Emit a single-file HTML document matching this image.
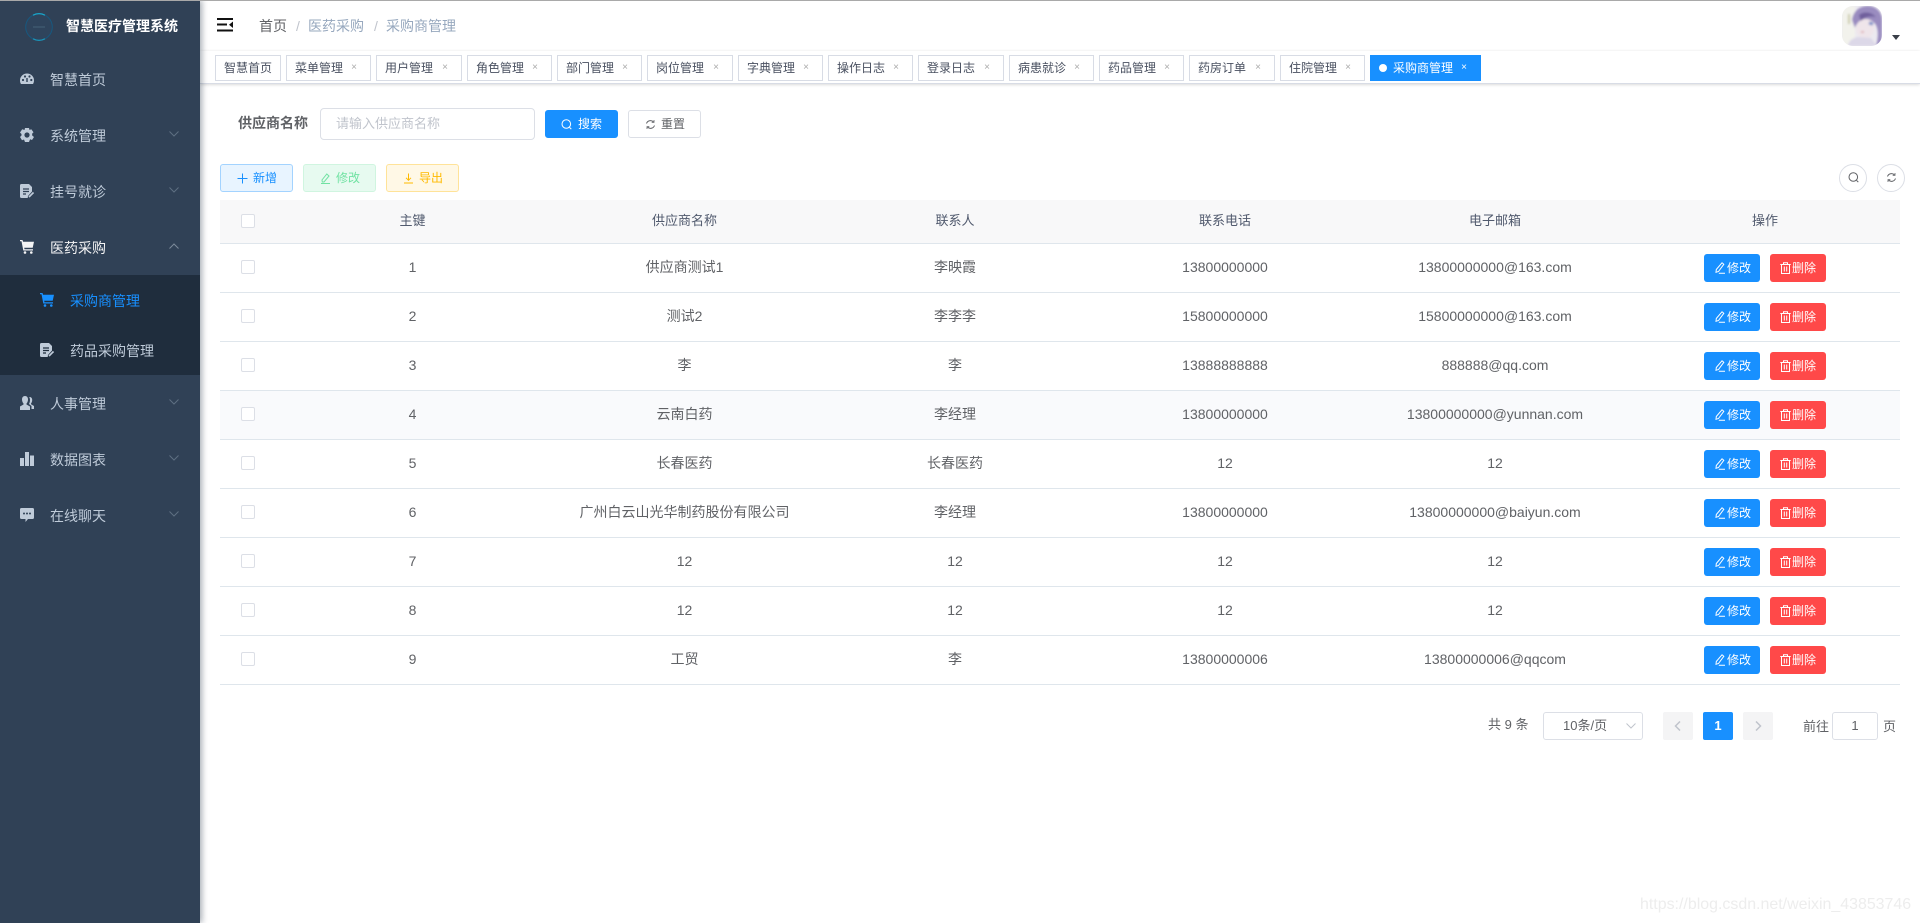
<!DOCTYPE html>
<html lang="zh-CN"><head><meta charset="utf-8"><title>采购商管理</title>
<style>
*{box-sizing:border-box}
html,body{margin:0;padding:0;width:1920px;height:923px;overflow:hidden;background:#fff;font-family:"Liberation Sans","Noto Sans CJK SC",sans-serif;font-size:14px;color:#606266}
body{filter:blur(.3px)}
#top{position:absolute;left:0;top:0;width:1920px;height:1px;background:#a9a9a9;z-index:9}
#side{position:absolute;left:0;top:0;width:200px;height:923px;background:#304156;box-shadow:2px 0 6px rgba(0,21,41,.35);z-index:5}
#side .t{position:absolute;left:50px;font-size:14px;line-height:20px;color:#bfcbd9;white-space:nowrap}
#side svg{position:absolute}
#sub{position:absolute;left:0;top:275px;width:200px;height:100px;background:#1f2d3d}
.chev{position:absolute;left:169px;width:10px;height:6px}
#nav{position:absolute;left:200px;top:1px;width:1720px;height:50px;box-shadow:0 1px 4px rgba(0,21,41,.08);background:#fff}
.bc{position:absolute;top:16px;line-height:20px;font-size:14px;color:#97a8be;white-space:nowrap}
#tags{position:absolute;left:200px;top:51px;width:1720px;height:33px;background:#fff;border-bottom:1px solid #d8dce5;box-shadow:0 1px 3px 0 rgba(0,0,0,.12),0 0 3px 0 rgba(0,0,0,.04)}
.tag{position:absolute;top:55px;height:26px;border:1px solid #d8dce5;background:#fff;color:#495060;font-size:12px;line-height:24px;padding-left:8px;white-space:nowrap;z-index:2}
.tag i{position:absolute;font-style:normal;right:13px;top:0;color:#aaa;font-size:10px}
.btn{position:absolute;height:28px;border-radius:3px;font-size:12px;line-height:26px;border:1px solid #dcdfe6;white-space:nowrap}
.btn svg{position:absolute;top:8px}
.btn span{position:absolute;top:0}
.lh{position:absolute;left:220px;top:200px;width:1680px;height:43px;background:#f8f8f9}
.line{position:absolute;left:220px;width:1680px;height:1px;background:#dfe6ec}
.cell{position:absolute;width:400px;text-align:center;line-height:20px;font-size:14px;color:#606266;white-space:nowrap}
.c1{left:212.5px}.c2{left:484.5px}.c3{left:755px}.c4{left:1025px}.c5{left:1295px}.c6{left:1565px}
.hd{color:#515a6e;font-weight:400;font-size:13px}
.cb{position:absolute;left:241px;width:14px;height:14px;border:1px solid #dcdfe6;border-radius:2px;background:#fff}
.ab{position:absolute;width:56px;height:28px;border-radius:3px;color:#fff;font-size:12px;line-height:28px;white-space:nowrap}
.ab span{position:absolute;left:23px;top:0}
.ab.d span{left:22px}
.ab svg{position:absolute;left:10px;top:8px}
.e{left:1704px;background:#1890ff}.d{left:1770px;background:#ff4949}
.pg{position:absolute;white-space:nowrap;font-size:13px;color:#606266}
</style></head><body>
<div id="top"></div>

<div id="side">
  <svg style="left:24px;top:12px" width="30" height="30" viewBox="0 0 30 30"><circle cx="15" cy="15" r="13.300" fill="#2f445c" stroke="#17587f" stroke-width="1"/><path d="M9 3.200A13 13 0 0 1 21 3.200" fill="none" stroke="#1aa5c9" stroke-width="1.200"/><path d="M9 26.800A13 13 0 0 0 21 26.800" fill="none" stroke="#1b93b8" stroke-width="1.200"/><path d="M9 15h12" stroke="#4d6a80" stroke-width=".8"/></svg>
  <div class="t" style="left:66px;top:16px;color:#fff;font-weight:700">智慧医疗管理系统</div>

  <svg style="left:20px;top:72px" width="14" height="14" viewBox="0 0 14 14"><path fill="#bfcbd9" d="M7 1.500A7 7 0 0 0 0 8.500c0 1.300.4 2.600 1 3.500h12c.6-.9 1-2.200 1-3.500a7 7 0 0 0-7-7z"/><circle cx="3" cy="8" r="1.100" fill="#304156"/><circle cx="5" cy="4.500" r="1.100" fill="#304156"/><circle cx="9.500" cy="4.500" r="1.100" fill="#304156"/><circle cx="11.300" cy="8" r="1.100" fill="#304156"/><path d="M7 10V6" stroke="#304156" stroke-width="1.400"/></svg>
  <div class="t" style="top:70px">智慧首页</div>

  <svg style="left:20px;top:128px" width="14" height="14" viewBox="0 0 14 14"><path fill="#bfcbd9" d="M5 0h4l.5 2 1.800-.8 2.200 3-1.400 1.600.1 1.700L14 9l-2 3-1.900-.7L9 14H5l-1-2.500-2 .7-2-3.200L1.500 7.500V6L0 4.500 2.200 1.200 4.500 2z"/><circle cx="7" cy="7" r="2.600" fill="#304156"/></svg>
  <div class="t" style="top:126px">系统管理</div>
  <svg class="chev" style="top:131px" viewBox="0 0 10 6"><path d="M.5.5 5 5 9.500.5" fill="none" stroke="#5e6f82" stroke-width="1"/></svg>

  <svg style="left:20px;top:184px" width="14" height="14" viewBox="0 0 14 14"><path fill="#bfcbd9" d="M1.500 0H9l3 3v4.500L8 12l-.3 2H1.500A1.500 1.500 0 0 1 0 12.500v-11A1.500 1.500 0 0 1 1.500 0z"/><path d="M3 5h6M3 7.500h6M3 10h3" stroke="#304156" stroke-width="1.200"/><path d="M9 13l4.500-4.500" stroke="#bfcbd9" stroke-width="1.600"/></svg>
  <div class="t" style="top:182px">挂号就诊</div>
  <svg class="chev" style="top:187px" viewBox="0 0 10 6"><path d="M.5.5 5 5 9.500.5" fill="none" stroke="#5e6f82" stroke-width="1"/></svg>

  <svg style="left:20px;top:240px" width="14" height="14" viewBox="0 0 14 14"><path fill="#f4f4f5" d="M0 0h2.500l.6 1.800H14l-1.300 6H4.200l.3 1.400H13v1.300H3.300L1.500 1.300H0z"/><circle cx="5" cy="12.500" r="1.300" fill="#f4f4f5"/><circle cx="11.300" cy="12.500" r="1.300" fill="#f4f4f5"/></svg>
  <div class="t" style="top:238px;color:#f4f4f5">医药采购</div>
  <svg class="chev" style="top:243px" viewBox="0 0 10 6"><path d="M.5 5.500 5 1l4.500 4.500" fill="none" stroke="#7c8a9a" stroke-width="1"/></svg>

  <div id="sub"></div>
  <svg style="left:40px;top:293px" width="14" height="14" viewBox="0 0 14 14"><path fill="#1890ff" d="M0 0h2.500l.6 1.800H14l-1.300 6H4.200l.3 1.400H13v1.300H3.300L1.500 1.300H0z"/><circle cx="5" cy="12.500" r="1.300" fill="#1890ff"/><circle cx="11.300" cy="12.500" r="1.300" fill="#1890ff"/></svg>
  <div class="t" style="left:70px;top:291px;color:#1890ff">采购商管理</div>
  <svg style="left:40px;top:343px" width="14" height="14" viewBox="0 0 14 14"><path fill="#bfcbd9" d="M1.500 0H9l3 3v4.500L8 12l-.3 2H1.500A1.500 1.500 0 0 1 0 12.500v-11A1.500 1.500 0 0 1 1.500 0z"/><path d="M3 5h6M3 7.500h6M3 10h3" stroke="#1f2d3d" stroke-width="1.200"/><path d="M9 13l4.500-4.500" stroke="#bfcbd9" stroke-width="1.600"/></svg>
  <div class="t" style="left:70px;top:341px">药品采购管理</div>

  <svg style="left:20px;top:396px" width="14" height="14" viewBox="0 0 14 14"><path fill="#bfcbd9" d="M5 0c2 0 3 1.500 3 3.500S7 7 6.500 7.500v1L10 10.500V14H0v-3.500l3.500-2v-1C3 7 2 5.500 2 3.500S3 0 5 0z"/><path fill="#bfcbd9" d="M9.500 1c1.800 0 2.700 1.300 2.700 3s-.8 3-1.200 3.500v.8l3 1.700V13h-2.500v-3L9 8c.6-1 1-2.500 1-4 0-1-.2-2-.8-3z"/></svg>
  <div class="t" style="top:394px">人事管理</div>
  <svg class="chev" style="top:399px" viewBox="0 0 10 6"><path d="M.5.5 5 5 9.500.5" fill="none" stroke="#5e6f82" stroke-width="1"/></svg>

  <svg style="left:20px;top:452px" width="14" height="14" viewBox="0 0 14 14"><path fill="#bfcbd9" d="M0 6h4v8H0zM5 0h4v14H5zM10 3.500h4V14h-4z"/></svg>
  <div class="t" style="top:450px">数据图表</div>
  <svg class="chev" style="top:455px" viewBox="0 0 10 6"><path d="M.5.5 5 5 9.500.5" fill="none" stroke="#5e6f82" stroke-width="1"/></svg>

  <svg style="left:20px;top:508px" width="14" height="14" viewBox="0 0 14 14"><path fill="#bfcbd9" d="M1.500 0h11A1.500 1.500 0 0 1 14 1.500v8a1.500 1.500 0 0 1-1.500 1.500H8l-2.500 3V11h-4A1.500 1.500 0 0 1 0 9.500v-8A1.500 1.500 0 0 1 1.500 0z"/><circle cx="4" cy="5.500" r="1" fill="#304156"/><circle cx="7" cy="5.500" r="1" fill="#304156"/><circle cx="10" cy="5.500" r="1" fill="#304156"/></svg>
  <div class="t" style="top:506px">在线聊天</div>
  <svg class="chev" style="top:511px" viewBox="0 0 10 6"><path d="M.5.5 5 5 9.500.5" fill="none" stroke="#5e6f82" stroke-width="1"/></svg>
</div>

<div id="nav"></div>
<svg style="position:absolute;left:217px;top:18px;z-index:3" width="16" height="14" viewBox="0 0 16 14"><path d="M0 1h16M0 6.500h10M0 12.500h16" stroke="#111" stroke-width="2"/><path d="M16 3.500v6.500L12 6.700z" fill="#111"/></svg>
<div class="bc" style="left:259px;color:#606266">首页</div>
<div class="bc" style="left:296px;color:#c0c4cc">/</div>
<div class="bc" style="left:308px">医药采购</div>
<div class="bc" style="left:374px;color:#c0c4cc">/</div>
<div class="bc" style="left:386px">采购商管理</div>

<svg style="position:absolute;left:1842px;top:6px;z-index:3" width="40" height="40" viewBox="0 0 40 40"><defs><clipPath id="av"><rect width="40" height="40" rx="11"/></clipPath><filter id="bl"><feGaussianBlur stdDeviation="1"/></filter></defs><g clip-path="url(#av)"><rect width="40" height="40" fill="#eceaf0"/><g filter="url(#bl)"><path d="M0 0h13v40H0z" fill="#f2f2ec"/><path d="M10 14C11 5 18 0 26 0c8 0 14 6 14 14v26h-6c2-7 3-15 0-21-3-5-8-6-13-5-4 1-7 4-8 8z" fill="#9a8cc0"/><path d="M14 23c0-6 4-10 10-10s9 5 8 11c-1 5-4 8-9 8-5 0-9-4-9-9z" fill="#efe5ea"/><path d="M17 9c5-4 12-3 17 2-5-1-11-1-15 4z" fill="#6f5f9c"/><path d="M27 17l4 1" stroke="#7f90c8" stroke-width="3"/><path d="M19 26h3" stroke="#d9a8ac" stroke-width="1.500"/><path d="M6 40c1-6 5-8 10-9l13 1 6 8z" fill="#dcd8e8"/><path d="M7 8v10" stroke="#c9c9a8" stroke-width="2"/></g></g></svg>
<svg style="position:absolute;left:1892px;top:35px;z-index:3" width="8" height="5" viewBox="0 0 8 5"><path d="M0 0h8L4 5z" fill="#3a3f48"/></svg>

<div id="tags"></div>
<div class="tag" style="left:215px;width:66px">智慧首页</div>
<div class="tag" style="left:286px;width:85px">菜单管理<i>×</i></div>
<div class="tag" style="left:376px;width:86px">用户管理<i>×</i></div>
<div class="tag" style="left:467px;width:85px">角色管理<i>×</i></div>
<div class="tag" style="left:557px;width:85px">部门管理<i>×</i></div>
<div class="tag" style="left:647px;width:86px">岗位管理<i>×</i></div>
<div class="tag" style="left:738px;width:85px">字典管理<i>×</i></div>
<div class="tag" style="left:828px;width:85px">操作日志<i>×</i></div>
<div class="tag" style="left:918px;width:86px">登录日志<i>×</i></div>
<div class="tag" style="left:1009px;width:85px">病患就诊<i>×</i></div>
<div class="tag" style="left:1099px;width:85px">药品管理<i>×</i></div>
<div class="tag" style="left:1189px;width:86px">药房订单<i>×</i></div>
<div class="tag" style="left:1280px;width:85px">住院管理<i>×</i></div>
<div class="tag" style="left:1370px;width:111px;background:#1890ff;border-color:#1890ff;color:#fff;padding-left:22px"><b style="position:absolute;left:8px;top:8px;width:8px;height:8px;border-radius:50%;background:#fff"></b>采购商管理<i style="color:#fff">×</i></div>

<div style="position:absolute;left:238px;top:113px;line-height:20px;font-weight:700;color:#606266;font-size:14px;white-space:nowrap">供应商名称</div>
<div style="position:absolute;left:320px;top:108px;width:215px;height:32px;border:1px solid #dcdfe6;border-radius:4px;background:#fff;font-size:13px;line-height:30px;padding-left:15px;color:#c0c4cc;white-space:nowrap">请输入供应商名称</div>
<div class="btn" style="left:545px;top:110px;width:73px;background:#1890ff;border-color:#1890ff;color:#fff"><svg style="left:15px" width="11" height="11" viewBox="0 0 11 11"><circle cx="5.300" cy="5" r="4.300" fill="none" stroke="#fff"/><path d="M8.500 8.300l1.800 1.800" stroke="#fff"/></svg><span style="left:32px">搜索</span></div>
<div class="btn" style="left:628px;top:110px;width:73px;background:#fff;color:#606266"><svg style="left:16px" width="11" height="11" viewBox="0 0 11 11"><path d="M1.500 4.500A4.200 4.200 0 0 1 8.500 3M9.500 6.500A4.200 4.200 0 0 1 2.500 8" fill="none" stroke="#606266"/><path d="M9 1v2.300H6.700M2 10V7.700h2.300" fill="none" stroke="#606266" stroke-width=".8"/></svg><span style="left:32px">重置</span></div>

<div class="btn" style="left:220px;top:164px;width:73px;background:#e8f4ff;border-color:#a3d3ff;color:#1890ff"><svg style="left:16px" width="11" height="11" viewBox="0 0 11 11"><path d="M5.500 .5v10M.5 5.500h10" stroke="#1890ff"/></svg><span style="left:32px">新增</span></div>
<div class="btn" style="left:303px;top:164px;width:73px;background:#e7faf0;border-color:#d0f5e0;color:#71e2a3"><svg style="left:16px" width="11" height="11" viewBox="0 0 11 11"><path d="M6.800 1 9 3 4 9H2.300L2 7zM1 10.500h9" fill="none" stroke="#71e2a3"/></svg><span style="left:32px">修改</span></div>
<div class="btn" style="left:386px;top:164px;width:73px;background:#fff8e6;border-color:#ffe399;color:#ffba00"><svg style="left:16px" width="11" height="11" viewBox="0 0 11 11"><path d="M5.500 .5v6.500M3 4.800l2.500 2.500L8 4.800M1 10h9" fill="none" stroke="#ffba00"/></svg><span style="left:32px">导出</span></div>

<div style="position:absolute;left:1839px;top:164px;width:28px;height:28px;border:1px solid #dcdfe6;border-radius:50%"></div>
<svg style="position:absolute;left:1848px;top:172px" width="11" height="11" viewBox="0 0 11 11"><circle cx="5.300" cy="5" r="4.300" fill="none" stroke="#606266"/><path d="M8.500 8.300l1.800 1.800" stroke="#606266"/></svg>
<div style="position:absolute;left:1877px;top:164px;width:28px;height:28px;border:1px solid #dcdfe6;border-radius:50%"></div>
<svg style="position:absolute;left:1886px;top:172px" width="11" height="11" viewBox="0 0 11 11"><path d="M1.500 4.500A4.200 4.200 0 0 1 8.500 3M9.500 6.500A4.200 4.200 0 0 1 2.500 8" fill="none" stroke="#606266"/><path d="M9 1v2.300H6.700M2 10V7.700h2.300" fill="none" stroke="#606266" stroke-width=".8"/></svg>

<div class="lh"></div>
<div style="position:absolute;left:220px;top:391px;width:1680px;height:48px;background:#f9fafc"></div>
<div class="line" style="top:243px"></div><div class="line" style="top:292px"></div><div class="line" style="top:341px"></div><div class="line" style="top:390px"></div><div class="line" style="top:439px"></div><div class="line" style="top:488px"></div><div class="line" style="top:537px"></div><div class="line" style="top:586px"></div><div class="line" style="top:635px"></div><div class="line" style="top:684px"></div>

<div class="cb" style="top:214px"></div>
<div class="cell c1 hd" style="top:211px">主键</div><div class="cell c2 hd" style="top:211px">供应商名称</div><div class="cell c3 hd" style="top:211px">联系人</div><div class="cell c4 hd" style="top:211px">联系电话</div><div class="cell c5 hd" style="top:211px">电子邮箱</div><div class="cell c6 hd" style="top:211px">操作</div>

<div class="cb" style="top:260px"></div>
<div class="cell c1" style="top:257px">1</div><div class="cell c2" style="top:257px">供应商测试1</div><div class="cell c3" style="top:257px">李映霞</div><div class="cell c4" style="top:257px">13800000000</div><div class="cell c5" style="top:257px">13800000000@163.com</div>
<div class="ab e" style="top:254px"><svg width="12" height="12" viewBox="0 0 12 12"><path d="M8 .8 9.800 2.300 4.500 9.500 2 10.300 2.300 7.500zM4.800 11.300H11" fill="none" stroke="#fff"/></svg><span>修改</span></div><div class="ab d" style="top:254px"><svg width="11" height="12" viewBox="0 0 11 12"><path d="M.3 2.500h10.400M3.500 2.500V.8h4v1.700M1.500 2.500v9h8v-9M4.300 4.500v5M6.700 4.500v5" fill="none" stroke="#fff"/></svg><span>删除</span></div>

<div class="cb" style="top:309px"></div>
<div class="cell c1" style="top:306px">2</div><div class="cell c2" style="top:306px">测试2</div><div class="cell c3" style="top:306px">李李李</div><div class="cell c4" style="top:306px">15800000000</div><div class="cell c5" style="top:306px">15800000000@163.com</div>
<div class="ab e" style="top:303px"><svg width="12" height="12" viewBox="0 0 12 12"><path d="M8 .8 9.800 2.300 4.500 9.500 2 10.300 2.300 7.500zM4.800 11.300H11" fill="none" stroke="#fff"/></svg><span>修改</span></div><div class="ab d" style="top:303px"><svg width="11" height="12" viewBox="0 0 11 12"><path d="M.3 2.500h10.400M3.500 2.500V.8h4v1.700M1.500 2.500v9h8v-9M4.300 4.500v5M6.700 4.500v5" fill="none" stroke="#fff"/></svg><span>删除</span></div>

<div class="cb" style="top:358px"></div>
<div class="cell c1" style="top:355px">3</div><div class="cell c2" style="top:355px">李</div><div class="cell c3" style="top:355px">李</div><div class="cell c4" style="top:355px">13888888888</div><div class="cell c5" style="top:355px">888888@qq.com</div>
<div class="ab e" style="top:352px"><svg width="12" height="12" viewBox="0 0 12 12"><path d="M8 .8 9.800 2.300 4.500 9.500 2 10.300 2.300 7.500zM4.800 11.300H11" fill="none" stroke="#fff"/></svg><span>修改</span></div><div class="ab d" style="top:352px"><svg width="11" height="12" viewBox="0 0 11 12"><path d="M.3 2.500h10.400M3.500 2.500V.8h4v1.700M1.500 2.500v9h8v-9M4.300 4.500v5M6.700 4.500v5" fill="none" stroke="#fff"/></svg><span>删除</span></div>

<div class="cb" style="top:407px"></div>
<div class="cell c1" style="top:404px">4</div><div class="cell c2" style="top:404px">云南白药</div><div class="cell c3" style="top:404px">李经理</div><div class="cell c4" style="top:404px">13800000000</div><div class="cell c5" style="top:404px">13800000000@yunnan.com</div>
<div class="ab e" style="top:401px"><svg width="12" height="12" viewBox="0 0 12 12"><path d="M8 .8 9.800 2.300 4.500 9.500 2 10.300 2.300 7.500zM4.800 11.300H11" fill="none" stroke="#fff"/></svg><span>修改</span></div><div class="ab d" style="top:401px"><svg width="11" height="12" viewBox="0 0 11 12"><path d="M.3 2.500h10.400M3.500 2.500V.8h4v1.700M1.500 2.500v9h8v-9M4.300 4.500v5M6.700 4.500v5" fill="none" stroke="#fff"/></svg><span>删除</span></div>

<div class="cb" style="top:456px"></div>
<div class="cell c1" style="top:453px">5</div><div class="cell c2" style="top:453px">长春医药</div><div class="cell c3" style="top:453px">长春医药</div><div class="cell c4" style="top:453px">12</div><div class="cell c5" style="top:453px">12</div>
<div class="ab e" style="top:450px"><svg width="12" height="12" viewBox="0 0 12 12"><path d="M8 .8 9.800 2.300 4.500 9.500 2 10.300 2.300 7.500zM4.800 11.300H11" fill="none" stroke="#fff"/></svg><span>修改</span></div><div class="ab d" style="top:450px"><svg width="11" height="12" viewBox="0 0 11 12"><path d="M.3 2.500h10.400M3.500 2.500V.8h4v1.700M1.500 2.500v9h8v-9M4.300 4.500v5M6.700 4.500v5" fill="none" stroke="#fff"/></svg><span>删除</span></div>

<div class="cb" style="top:505px"></div>
<div class="cell c1" style="top:502px">6</div><div class="cell c2" style="top:502px">广州白云山光华制药股份有限公司</div><div class="cell c3" style="top:502px">李经理</div><div class="cell c4" style="top:502px">13800000000</div><div class="cell c5" style="top:502px">13800000000@baiyun.com</div>
<div class="ab e" style="top:499px"><svg width="12" height="12" viewBox="0 0 12 12"><path d="M8 .8 9.800 2.300 4.500 9.500 2 10.300 2.300 7.500zM4.800 11.300H11" fill="none" stroke="#fff"/></svg><span>修改</span></div><div class="ab d" style="top:499px"><svg width="11" height="12" viewBox="0 0 11 12"><path d="M.3 2.500h10.400M3.500 2.500V.8h4v1.700M1.500 2.500v9h8v-9M4.300 4.500v5M6.700 4.500v5" fill="none" stroke="#fff"/></svg><span>删除</span></div>

<div class="cb" style="top:554px"></div>
<div class="cell c1" style="top:551px">7</div><div class="cell c2" style="top:551px">12</div><div class="cell c3" style="top:551px">12</div><div class="cell c4" style="top:551px">12</div><div class="cell c5" style="top:551px">12</div>
<div class="ab e" style="top:548px"><svg width="12" height="12" viewBox="0 0 12 12"><path d="M8 .8 9.800 2.300 4.500 9.500 2 10.300 2.300 7.500zM4.800 11.300H11" fill="none" stroke="#fff"/></svg><span>修改</span></div><div class="ab d" style="top:548px"><svg width="11" height="12" viewBox="0 0 11 12"><path d="M.3 2.500h10.400M3.500 2.500V.8h4v1.700M1.500 2.500v9h8v-9M4.300 4.500v5M6.700 4.500v5" fill="none" stroke="#fff"/></svg><span>删除</span></div>

<div class="cb" style="top:603px"></div>
<div class="cell c1" style="top:600px">8</div><div class="cell c2" style="top:600px">12</div><div class="cell c3" style="top:600px">12</div><div class="cell c4" style="top:600px">12</div><div class="cell c5" style="top:600px">12</div>
<div class="ab e" style="top:597px"><svg width="12" height="12" viewBox="0 0 12 12"><path d="M8 .8 9.800 2.300 4.500 9.500 2 10.300 2.300 7.500zM4.800 11.300H11" fill="none" stroke="#fff"/></svg><span>修改</span></div><div class="ab d" style="top:597px"><svg width="11" height="12" viewBox="0 0 11 12"><path d="M.3 2.500h10.400M3.500 2.500V.8h4v1.700M1.500 2.500v9h8v-9M4.300 4.500v5M6.700 4.500v5" fill="none" stroke="#fff"/></svg><span>删除</span></div>

<div class="cb" style="top:652px"></div>
<div class="cell c1" style="top:649px">9</div><div class="cell c2" style="top:649px">工贸</div><div class="cell c3" style="top:649px">李</div><div class="cell c4" style="top:649px">13800000006</div><div class="cell c5" style="top:649px">13800000006@qqcom</div>
<div class="ab e" style="top:646px"><svg width="12" height="12" viewBox="0 0 12 12"><path d="M8 .8 9.800 2.300 4.500 9.500 2 10.300 2.300 7.500zM4.800 11.300H11" fill="none" stroke="#fff"/></svg><span>修改</span></div><div class="ab d" style="top:646px"><svg width="11" height="12" viewBox="0 0 11 12"><path d="M.3 2.500h10.400M3.500 2.500V.8h4v1.700M1.500 2.500v9h8v-9M4.300 4.500v5M6.700 4.500v5" fill="none" stroke="#fff"/></svg><span>删除</span></div>

<div class="pg" style="left:1488px;top:716px;line-height:18px">共 9 条</div>
<div class="pg" style="left:1543px;top:712px;width:100px;height:28px;border:1px solid #dcdfe6;border-radius:3px;line-height:26px;padding-left:19px">10条/页<svg style="position:absolute;left:82px;top:10px" width="10" height="6" viewBox="0 0 10 6"><path d="M.5.500 5 5 9.500.500" fill="none" stroke="#c0c4cc"/></svg></div>
<div style="position:absolute;left:1663px;top:712px;width:30px;height:28px;background:#f4f4f5;border-radius:2px"><svg style="position:absolute;left:11px;top:9px" width="7" height="10" viewBox="0 0 7 10"><path d="M6 .5 1.500 5 6 9.500" fill="none" stroke="#c0c4cc" stroke-width="1.500"/></svg></div>
<div style="position:absolute;left:1703px;top:712px;width:30px;height:28px;background:#1890ff;border-radius:2px;color:#fff;font-weight:700;font-size:13px;line-height:28px;text-align:center">1</div>
<div style="position:absolute;left:1743px;top:712px;width:30px;height:28px;background:#f4f4f5;border-radius:2px"><svg style="position:absolute;left:12px;top:9px" width="7" height="10" viewBox="0 0 7 10"><path d="M1 .5 5.500 5 1 9.500" fill="none" stroke="#c0c4cc" stroke-width="1.500"/></svg></div>
<div class="pg" style="left:1803px;top:718px;line-height:18px">前往</div>
<div class="pg" style="left:1832px;top:712px;width:46px;height:28px;border:1px solid #dcdfe6;border-radius:3px;line-height:26px;text-align:center">1</div>
<div class="pg" style="left:1883px;top:718px;line-height:18px">页</div>

<div style="position:absolute;left:1640px;top:895px;font-size:15.950px;line-height:20px;color:#ededed;white-space:nowrap">https://blog.csdn.net/weixin_43853746</div>
</body></html>
